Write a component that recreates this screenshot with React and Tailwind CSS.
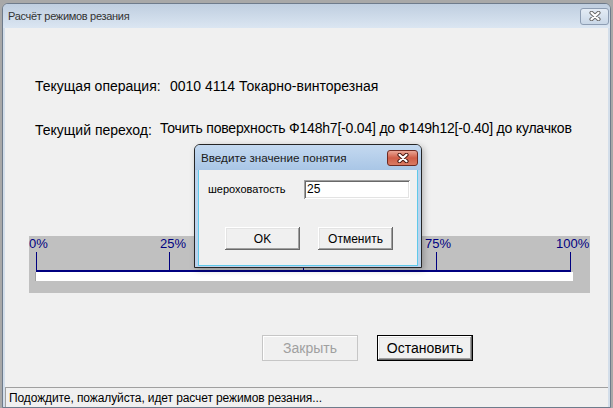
import React from 'react';

// classic 3D raised button edge
const raised =
  'shadow-[inset_-1px_-1px_0_#696969,inset_1px_1px_0_#ffffff,inset_-2px_-2px_0_#a0a0a0,inset_2px_2px_0_#e3e3e3]';
// sunken edit box edge
const sunken =
  'shadow-[inset_1px_1px_0_#a0a0a0,inset_-1px_-1px_0_#ffffff,inset_2px_2px_0_#696969,inset_-2px_-2px_0_#e3e3e3]';

const CloseGlyph = ({ outline = '#555' }) => (
  <svg width="14" height="10" viewBox="0 0 14 10">
    <path d="M3.5 1.8 L10.5 8.2 M10.5 1.8 L3.5 8.2" stroke={outline} strokeWidth="4.2" strokeLinecap="round" />
    <path d="M3.5 1.8 L10.5 8.2 M10.5 1.8 L3.5 8.2" stroke="#ffffff" strokeWidth="2.2" strokeLinecap="round" />
  </svg>
);

const ticks = [7, 140, 274, 407, 541];

const labels = [
  { t: '0%', x: 0 },
  { t: '25%', x: 131 },
  { t: '75%', x: 396 },
  { t: '100%', x: 527 },
];

function Progress() {
  return (
    <div className="relative ml-[24px] mt-[98px] w-[561px] h-[57px] bg-[#c0c0c0]">
      {labels.map(l => (
        <span
          key={l.t}
          className="absolute top-0 text-[13px] leading-[15px] text-[#000080]"
          style={{ left: l.x }}
        >
          {l.t}
        </span>
      ))}
      <svg className="absolute left-0 top-0" width="561" height="40">
        {ticks.map(x => (
          <line key={x} x1={x + 0.5} y1="16" x2={x + 0.5} y2="35" stroke="#000080" strokeWidth="1" />
        ))}
        <line x1="7" y1="35" x2="542" y2="35" stroke="#000080" strokeWidth="2" />
      </svg>
      <div className="absolute left-[6px] top-[36px] w-[538px] h-[9px] bg-white border-l border-[#a0a0a0]" />
    </div>
  );
}

function Dialog() {
  return (
    <div className="absolute left-[194px] top-[144px] w-[228px] h-[124px] flex flex-col rounded-t-[6px] border border-[#262626] bg-[#bcd3ec] shadow-[2px_2px_6px_rgba(0,0,0,0.25)]">
      <div className="h-[25px] flex items-center justify-between rounded-t-[5px] bg-linear-to-b from-[#c4d9f0] to-[#a9c6e6] pl-[6px] pr-[3px]">
        <span className="text-[11.7px] text-[#1a1a1a]">Введите значение понятия</span>
        <div className="w-[31px] h-[16px] flex items-center justify-center rounded-[3px] border border-[#6e2a22] bg-linear-to-b from-[#e9a595] via-[#cf5d47] to-[#d97a63]">
          <CloseGlyph outline="#4a1a14" />
        </div>
      </div>
      <div className="flex-1 mx-[3px] mb-[1px] bg-[#f0f0f0] border-b border-l border-r border-[#5fc9ea] relative">
        <div className="flex items-center pt-[10px] pl-[9px]">
          <span className="w-[96px] text-[11px]">шероховатость</span>
          <div className={`w-[106px] h-[19px] bg-white ${sunken} pl-[3px] text-[12px] leading-[19px]`}>25</div>
        </div>
        <div className="flex pl-[26px] mt-[28px] gap-[18px]">
          <div className={`w-[75px] h-[23px] flex items-center justify-center text-[12px] bg-[#f0f0f0] ${raised}`}>OK</div>
          <div className={`w-[75px] h-[23px] flex items-center justify-center text-[12px] bg-[#f0f0f0] ${raised}`}>Отменить</div>
        </div>
      </div>
    </div>
  );
}

export default function App() {
  return (
    <div className="relative w-[613px] h-[408px] overflow-hidden bg-[#a8a8a8] pt-[3px] pl-[2px] font-['Liberation_Sans',Arial,sans-serif] text-black">
      <div className="w-[609px] h-[405px] flex flex-col rounded-t-[6px] border border-[#6e7b8b] bg-[#d3deea]">
        {/* title bar */}
        <div className="h-[24px] shrink-0 flex items-center justify-between rounded-t-[5px] bg-linear-to-b from-[#bfcee0] to-[#dbe6f2] pl-[5px] pr-[1px]">
          <span className="text-[11px] tracking-[-0.3px] text-[#333333]">Расчёт режимов резания</span>
          <div className="w-[29px] h-[17px] flex items-center justify-center rounded-[3px] border border-[#8d9db3] bg-linear-to-b from-[#e4ecf5] to-[#c9d7e7]">
            <CloseGlyph outline="#6b6b6b" />
          </div>
        </div>

        {/* client */}
        <div className="flex-1 mx-[2px] bg-[#f0f0f0] flex flex-col">
          <div className="pl-[30px] pt-[50px] text-[14px] leading-[16px]">
            <div className="flex">
              <span className="w-[135px]">Текущая операция:</span>
              <span>0010 4114 Токарно-винторезная</span>
            </div>
            <div className="flex mt-[28px]">
              <span className="w-[125px]">Текущий переход:</span>
              <span className="-mt-[2px] tracking-[-0.2px]">Точить поверхность Ф148h7[-0.04] до Ф149h12[-0.40] до кулачков</span>
            </div>
          </div>

          <Progress />

          <div className="flex ml-[257px] mt-[42px] gap-[19px] text-[14px]">
            <div className="w-[96px] h-[26px] flex items-center justify-center bg-[#f0f0f0] border border-[#c6c6c6] text-[#a0a0a0] shadow-[inset_1px_1px_0_#ffffff]">
              Закрыть
            </div>
            <div className="w-[96px] h-[26px] border border-black">
              <div className={`w-full h-full flex items-center justify-center bg-[#f0f0f0] ${raised}`}>Остановить</div>
            </div>
          </div>

          <div className="mt-auto h-[20px] flex items-center pl-[3px] border-t border-l border-[#a0a0a0] text-[12px] tracking-[-0.1px]">
            Подождите, пожалуйста, идет расчет режимов резания...
          </div>
        </div>
      </div>
      <Dialog />
    </div>
  );
}
